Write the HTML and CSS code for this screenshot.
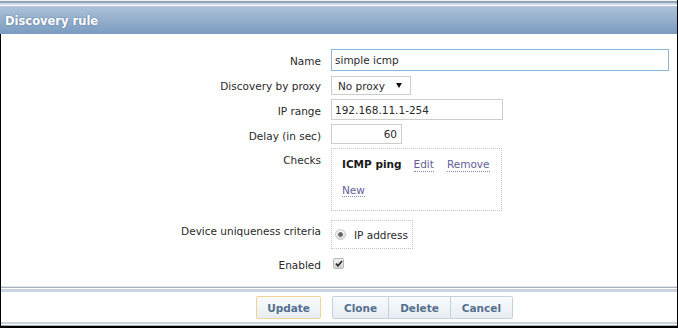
FILE: index.html
```html
<!DOCTYPE html>
<html lang="en">
<head>
    <meta charset="UTF-8">
    <meta name="viewport" content="width=device-width, initial-scale=1.0">
    <title>Discovery rule</title>
    <link rel="stylesheet" href="styles.css">
</head>
<body>
    <div class="page">
        <div class="topbar"></div>
        <div class="header">Discovery rule</div>

        <div class="content">
            <div class="row">
                <label class="label" for="name">Name</label>
                <div class="field">
                    <input type="text" id="name" class="text text-focused name" value="simple icmp">
                </div>
            </div>
            <div class="row">
                <label class="label label-select">Discovery by proxy</label>
                <div class="field">
                    <div class="select">
                        <span>No proxy</span>
                        <svg width="6" height="5" viewBox="0 0 6 5"><path d="M0 0 L6 0 L3 5 Z" fill="#111"/></svg>
                    </div>
                </div>
            </div>
            <div class="row">
                <label class="label" for="iprange">IP range</label>
                <div class="field">
                    <input type="text" id="iprange" class="text iprange" value="192.168.11.1-254">
                </div>
            </div>
            <div class="row">
                <label class="label" for="delay">Delay (in sec)</label>
                <div class="field">
                    <input type="text" id="delay" class="text delay" value="60">
                </div>
            </div>
            <div class="row row-checks">
                <label class="label">Checks</label>
                <div class="field">
                    <div class="checks">
                        <div class="checks-row">
                            <span class="check-name">ICMP ping</span>
                            <a href="#" class="link">Edit</a>
                            <a href="#" class="link link-remove">Remove</a>
                        </div>
                        <div class="checks-new">
                            <a href="#" class="link">New</a>
                        </div>
                    </div>
                </div>
            </div>
            <div class="row">
                <label class="label label-device">Device uniqueness criteria</label>
                <div class="field">
                    <div class="radio-box">
                        <span class="radio"></span>
                        <span>IP address</span>
                    </div>
                </div>
            </div>
            <div class="row">
                <label class="label">Enabled</label>
                <div class="field">
                    <span class="checkbox">
                        <svg width="8" height="7" viewBox="0 0 8 7"><path d="M1 3.6 L3 5.8 L7 1" fill="none" stroke="#2b2b2b" stroke-width="1.7"/></svg>
                    </span>
                </div>
            </div>
        </div>

        <div class="footer">
            <div class="footer-main">
                <button class="btn btn-main">Update</button>
            </div>
            <div class="btn-group">
                <button class="btn">Clone</button>
                <button class="btn">Delete</button>
                <button class="btn">Cancel</button>
            </div>
        </div>
    </div>
</body>
</html>
```

FILE: styles.css
```css
* {
    box-sizing: border-box;
}
body {
    margin: 0;
    font-family: "DejaVu Sans", Verdana, sans-serif;
    font-size: 10.5px;
    color: #2a2a2a;
}
.page {
    width: 678px;
    height: 328px;
    border-right: 1px solid #000;
    border-bottom: 2px solid #000;
    background-color: #fff;
    overflow: hidden;
}
.topbar {
    height: 6px;
    background: linear-gradient(to bottom, #eef1f4 0 1px, #8fa4bb 1px 3px, #cfd9e3 3px 5px, #fff 5px 6px);
}
.header {
    height: 28px;
    padding: 8px 0 0 5px;
    line-height: 14px;
    font-size: 11.5px;
    font-weight: bold;
    color: #fff;
    text-shadow: 0 0 2px rgba(50, 80, 115, 0.6);
    background: linear-gradient(to bottom, #afc3d9, #799bc0);
}

/* form rows */
.content {
    height: 252px;
    padding-top: 15px;
    border-left: 1px solid #000;
}
.row {
    display: grid;
    grid-template-columns: 320px 1fr;
    column-gap: 10px;
    margin-bottom: 4px;
}
.row-checks {
    margin-bottom: 9px;
}
.label {
    text-align: right;
    padding-top: 5px;
    line-height: 14px;
}
.label-select,
.label-device {
    padding-top: 4px;
}
.field {
    display: flex;
    align-items: flex-start;
}
.text {
    display: block;
    height: 22px;
    padding: 0 3px;
    border: 1px solid #cdcdcd;
    font: inherit;
    color: inherit;
    background-color: #fff;
    outline: none;
}
.text-focused {
    border-color: #8db4db;
}
.name {
    width: 338px;
}
.iprange {
    width: 172px;
    height: 21px;
}
.delay {
    width: 71px;
    height: 20px;
    padding-right: 4px;
    text-align: right;
}
.select {
    display: flex;
    align-items: center;
    justify-content: space-between;
    width: 80px;
    height: 19px;
    margin-top: 1px;
    padding: 0 8px 0 6px;
    border: 1px solid #cdcdcd;
}

/* checks list */
.checks {
    width: 171px;
    padding: 8px 10px 13px;
    border: 1px dotted #c2c2c2;
    line-height: 14px;
}
.checks-row {
    display: flex;
}
.check-name {
    font-weight: bold;
    color: #1a1a1a;
    margin-right: 12px;
}
.link {
    color: #5f5e98;
    text-decoration: none;
    border-bottom: 1px dotted #8a88b0;
}
.link-remove {
    margin-left: 13px;
}
.checks-new {
    margin-top: 11px;
}

.radio-box {
    display: flex;
    align-items: center;
    height: 29px;
    padding: 0 4px 0 3px;
    border: 1px dotted #c2c2c2;
}
.radio {
    width: 11px;
    height: 11px;
    margin-right: 8px;
    border: 1px solid #c8c8c8;
    border-radius: 50%;
    background: radial-gradient(circle, #666 0 2px, transparent 2.6px), linear-gradient(#f6f6f6, #dcdcdc);
}
.checkbox {
    display: flex;
    align-items: center;
    justify-content: center;
    width: 11px;
    height: 11px;
    margin: 5px 0 0 2px;
    border: 1px solid #b8b8b8;
    border-radius: 2px;
    background: linear-gradient(#f2f2f2, #d4d4d4);
}

/* buttons */
.footer {
    display: grid;
    grid-template-columns: 320px 1fr;
    column-gap: 10px;
    height: 40px;
    padding-top: 10px;
    border-left: 1px solid #000;
    background: linear-gradient(to bottom,
        #e0e6ec 0 1px, #a6b1bd 1px 2px, #fff 2px 3px, #c9d4df 3px 6px,
        #fff 6px calc(100% - 4px), #c9d4df calc(100% - 4px) calc(100% - 2px),
        #fff calc(100% - 2px) calc(100% - 1px), #a6b1bd calc(100% - 1px));
}
.footer-main {
    display: flex;
    justify-content: flex-end;
}
.btn {
    height: 23px;
    padding: 0 11px;
    font-family: "DejaVu Sans", Verdana, sans-serif;
    font-size: 10.5px;
    font-weight: bold;
    color: #55708f;
    background: linear-gradient(#f9fbfc, #e7edf3);
    border: 1px solid #c4d1de;
}
.btn-main {
    padding: 0 10px;
    border-color: #f1d395;
    border-radius: 2px;
}
.btn-group {
    display: flex;
    margin-left: 1px;
}
.btn-group .btn + .btn {
    border-left: none;
}
.btn-group .btn:first-child {
    border-radius: 2px 0 0 2px;
}
.btn-group .btn:last-child {
    border-radius: 0 2px 2px 0;
}
```
